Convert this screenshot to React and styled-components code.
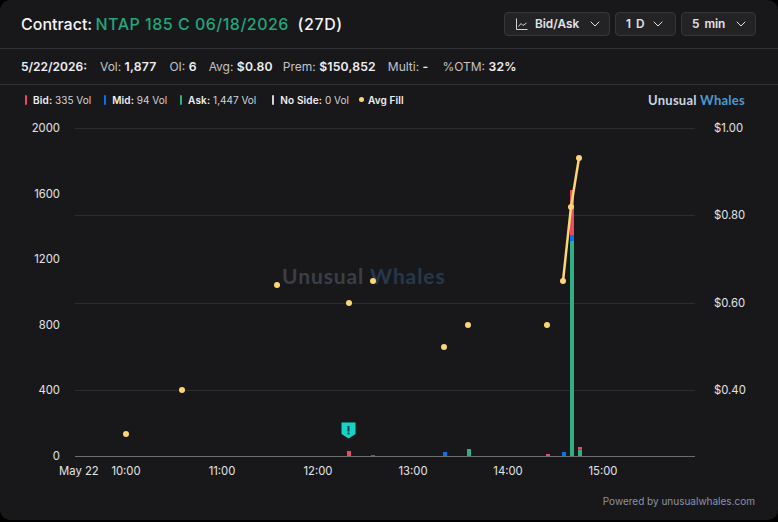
import React from "react";
import styled, { createGlobalStyle } from "styled-components";
import { ChevronDown } from "lucide-react";

const Global = createGlobalStyle`
  html, body { margin: 0; padding: 0; background: #000; height: 100%; }
  #root { height: 100%; }
  * { box-sizing: border-box; }
`;

const Card = styled.div`
  width: 778px; height: 520px; background: #18181b; border-radius: 10px;
  font-family: Inter, "Liberation Sans", sans-serif; color: #f4f4f5;
  display: flex; flex-direction: column; overflow: hidden;
`;
const Header = styled.header`
  height: 49px; flex: none; display: flex; align-items: center; justify-content: space-between;
  padding: 0 22px 1px 21px; border-bottom: 1px solid #323236;
`;
const Title = styled.h1`
  margin: 0; font-size: 16px; line-height: 20px; font-weight: 500; color: #f4f4f5; white-space: pre;
`;
const Accent = styled.span` color: #22a67a; letter-spacing: .5px; margin-left: -1px; `;
const Days = styled.span` letter-spacing: .6px; `;
const Controls = styled.div` display: flex; gap: 5px; `;
const Select = styled.button`
  height: 24px; width: ${p => p.$w}px; padding: 0 0 0 ${p => p.$pl}px; display: flex; align-items: center; gap: ${p => p.$gap}px;
  background: #232326; border: 1px solid #36363a; border-radius: 4px; color: #e4e4e7;
  font: 600 11.8px Inter, sans-serif; word-spacing: 2px;
`;
const Stats = styled.div`
  height: 36px; flex: none; display: flex; align-items: center; padding: 0 0 0 21px;
  border-bottom: 1px solid #323236; font-size: 12px; color: #c4c4c8; white-space: pre;
`;
const Stat = styled.span` margin-right: ${p => p.$mr}px; `;
const DateLabel = styled.b` font-weight: 600; color: #f0f0f2; font-size: 12px; `;
const Strong = styled.b` font-weight: 600; color: #f0f0f2; font-size: 12.2px; letter-spacing: .2px; `;
const LegendRow = styled.div`
  height: 27px; flex: none; display: flex; align-items: center; justify-content: space-between;
  padding: 2px 33px 0 25px;
`;
const Legend = styled.div` display: flex; align-items: center; font-size: 10px; color: #d4d4d8; `;
const LegendItem = styled.span` display: flex; align-items: center; white-space: pre; margin-right: ${p => p.$mr}px; `;
const LegendKey = styled.b` font-weight: 600; color: #f0f0f2; letter-spacing: .15px; `;
const Swatch = styled.i` width: 2px; height: 10px; margin-right: 6px; border-radius: 1px; background: ${p => p.$c}; `;
const Dot = styled.i` width: 5px; height: 5px; margin-right: 4px; border-radius: 50%; background: #fdd673; `;
const Brand = styled.span`
  font: 700 13px Lato, sans-serif; color: #cbd5e1; letter-spacing: .25px;
`;
const BrandBlue = styled.span` color: #4b9bd1; `;
const Chart = styled.svg` display: block; flex: none; width: 778px; height: 380px; `;
const AxisText = styled.text` font: 400 11.3px Inter, sans-serif; fill: #e4e4e7; `;
const Watermark = styled.text` font: 700 21px Lato, sans-serif; letter-spacing: .9px; fill: #3a3f47; `;
const Footer = styled.footer`
  flex: 1; display: flex; align-items: flex-start; justify-content: flex-end; padding: 3px 23px 0 0;
  font-size: 10px; color: #8a94a6;
`;

const GRID = [128, 215, 303, 390];
const LEFT = [[2000, 128], [1600, 194], [1200, 259], [800, 325], [400, 390], [0, 456]];
const RIGHT = [["$1.00", 128], ["$0.80", 215], ["$0.60", 303], ["$0.40", 390]];
const TIMES = [["10:00", 126], ["11:00", 222], ["12:00", 318], ["13:00", 413], ["14:00", 508], ["15:00", 603]];
const RED = "#ea4a64", BLUE = "#0a72ef", GREEN = "#2fb083";
const BARS = [
  [347, 451, 5, RED], [371, 455, 1, BLUE], [443, 452, 4, BLUE], [467, 449, 7, GREEN],
  [546, 454, 2, RED], [562, 452, 4, BLUE], [578, 449.5, 6.5, GREEN], [578, 447, 2.5, RED],
  [570, 190, 45, RED], [570, 235, 6, BLUE], [570, 241, 215, GREEN],
];
const DOTS = [[126, 434], [182, 390], [277, 285], [349, 303], [373, 281], [444, 347], [468, 325], [547, 325], [563, 281], [571, 207], [579, 158]];

const LineIcon = () => (
  <svg width="12" height="12" viewBox="0 0 12 12" fill="none" stroke="#d4d4d8" strokeWidth="1">
    <path d="M.5 .5V11.5H11.5M2.5 8.5L5 5.5L7 7.5L10.5 5" />
  </svg>
);

export default function App() {
  return (
    <Card>
      <Global />
      <Header>
        <Title>Contract: <Accent>NTAP 185 C 06/18/2026</Accent>  <Days>(27D)</Days></Title>
        <Controls>
          <Select $w={106} $pl={11} $gap={7}><LineIcon />Bid/Ask<ChevronDown size={16} strokeWidth={1.5} style={{ marginLeft: 1 }} /></Select>
          <Select $w={61} $pl={10} $gap={6}>1 D<ChevronDown size={16} strokeWidth={1.5} /></Select>
          <Select $w={75} $pl={10} $gap={8}>5 min<ChevronDown size={16} strokeWidth={1.5} /></Select>
        </Controls>
      </Header>
      <Stats>
        <Stat $mr={13}><DateLabel>5/22/2026:</DateLabel></Stat>
        <Stat $mr={13}>Vol: <Strong>1,877</Strong></Stat>
        <Stat $mr={12}>OI: <Strong>6</Strong></Stat>
        <Stat $mr={10}>Avg: <Strong>$0.80</Strong></Stat>
        <Stat $mr={12}>Prem: <Strong>$150,852</Strong></Stat>
        <Stat $mr={14}>Multi: <Strong>-</Strong></Stat>
        <Stat $mr={0}>%OTM: <Strong>32%</Strong></Stat>
      </Stats>
      <LegendRow>
        <Legend>
          <LegendItem $mr={13}><Swatch $c={RED} /><LegendKey>Bid:</LegendKey> 335 Vol</LegendItem>
          <LegendItem $mr={13}><Swatch $c={BLUE} /><LegendKey>Mid:</LegendKey> 94 Vol</LegendItem>
          <LegendItem $mr={16}><Swatch $c={GREEN} /><LegendKey>Ask:</LegendKey> 1,447 Vol</LegendItem>
          <LegendItem $mr={10}><Swatch $c="#d4d4d8" /><LegendKey>No Side:</LegendKey> 0 Vol</LegendItem>
          <LegendItem $mr={0}><Dot /><LegendKey>Avg Fill</LegendKey></LegendItem>
        </Legend>
        <Brand>Unusual <BrandBlue>Whales</BrandBlue></Brand>
      </LegendRow>
      <Chart viewBox="0 112 778 380">
        {GRID.map(y => <line key={y} x1="75" x2="695" y1={y + .5} y2={y + .5} stroke="#2c2c30" />)}
        <Watermark x="282" y="284">Unusual <tspan fill="#26394c">Whales</tspan></Watermark>
        <line x1="75" x2="695" y1="456.5" y2="456.5" stroke="#6e6e72" />
        {LEFT.map(([t, y]) => <AxisText key={t} x="60" y={y + 4} textAnchor="end">{t}</AxisText>)}
        {RIGHT.map(([t, y]) => <AxisText key={t} x="714" y={y + 4}>{t}</AxisText>)}
        <AxisText x="59" y="475">May 22</AxisText>
        {TIMES.map(([t, x]) => <AxisText key={t} x={x} y="475" textAnchor="middle">{t}</AxisText>)}
        {BARS.map(([x, y, h, c], i) => <rect key={i} x={x} y={y} width="4" height={h} fill={c} />)}
        <path d="M341.5 422.5H355.5V434L348.5 438.5L341.5 434Z" fill="#17d3c5" />
        <rect x="347.5" y="426" width="2" height="5.5" fill="#0b3b46" />
        <rect x="347.5" y="432.5" width="2" height="2" fill="#0b3b46" />
        <polyline points="563,281 571,207 579,158" fill="none" stroke="#fdd673" strokeWidth="2.5" />
        {DOTS.map(([x, y]) => <circle key={x} cx={x} cy={y} r="3" fill="#fdd673" />)}
      </Chart>
      <Footer>Powered by unusualwhales.com</Footer>
    </Card>
  );
}
